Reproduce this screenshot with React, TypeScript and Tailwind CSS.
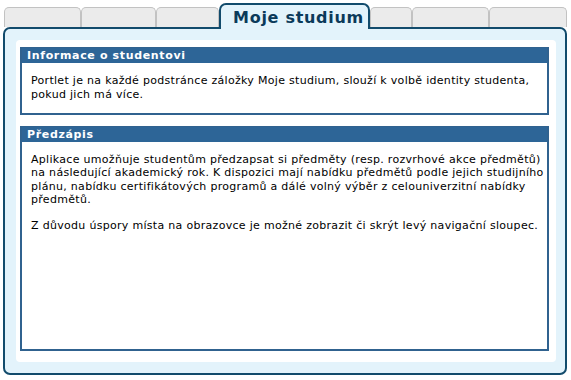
import React from "react";

const Tab = ({ w }: { w: string }) => (
  <div className={`${w} h-[20px] border border-b-0 border-[#c2c2c2] rounded-t-[5px] bg-[#ebebeb]`} />
);

export default function App() {
  return (
    <div className="w-[571px] h-[380px] bg-white font-['DejaVu_Sans',Verdana,sans-serif] text-[11px] text-black overflow-hidden">
      <div className="flex items-end h-[27px] pl-[4px]">
        <Tab w="w-[77px]" />
        <Tab w="w-[75px]" />
        <Tab w="w-[63px]" />
        <div className="relative z-10 w-[151px] h-[26px] -mb-[2px] border-2 border-b-0 border-[#124b6c] rounded-t-[7px] bg-[#e3f3fb] flex justify-center pt-[4px] pl-[8px]">
          <span className="text-[16px] leading-[18px] font-bold tracking-[0.7px] text-[#0b3a5a]">Moje studium</span>
        </div>
        <Tab w="w-[42px]" />
        <Tab w="w-[77px]" />
        <Tab w="w-[78px]" />
      </div>
      <div className="ml-[3px] w-[564px] h-[348px] border-2 border-[#124b6c] rounded-[7px] bg-[#e3f3fb] pt-[11px] pb-[11px] pl-[11px] pr-[9px]">
        <div className="h-full bg-white rounded-[4px] pt-[7px] pl-[4px] pr-[7px] pb-[11px] flex flex-col gap-[11px]">
          <div className="h-[68px] border-2 border-[#30628f] flex flex-col">
            <div className="h-[15px] bg-[#2d6597] text-white font-bold leading-[15px] pl-[5px] -mt-[1px] tracking-[0.65px]">Informace o studentovi</div>
            <div className="pt-[11px] pl-[9px] leading-[14px] whitespace-nowrap tracking-[0.3px]">
              Portlet je na každé podstránce záložky Moje studium, slouží k volbě identity studenta,
              <br />
              pokud jich má více.
            </div>
          </div>
          <div className="flex-1 border-2 border-[#30628f] flex flex-col">
            <div className="h-[15px] bg-[#2d6597] text-white font-bold leading-[15px] pl-[5px] -mt-[1px] tracking-[0.65px]">Předzápis</div>
            <div className="pt-[11px] pl-[9px] leading-[13.3px] whitespace-nowrap tracking-[0.3px]">
              Aplikace umožňuje studentům předzapsat si předměty (resp. rozvrhové akce předmětů)
              <br />
              na následující akademický rok. K dispozici mají nabídku předmětů podle jejich studijního
              <br />
              plánu, nabídku certifikátových programů a dálé volný výběr z celouniverzitní nabídky
              <br />
              předmětů.
              <br />
              <br />
              Z důvodu úspory místa na obrazovce je možné zobrazit či skrýt levý navigační sloupec.
            </div>
          </div>
        </div>
      </div>
    </div>
  );
}
